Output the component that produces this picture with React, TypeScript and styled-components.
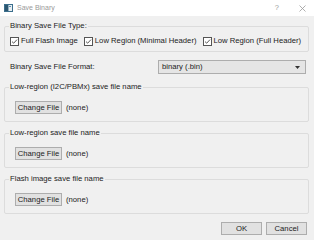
import React from "react";
import styled, { createGlobalStyle } from "styled-components";

const Global = createGlobalStyle`
  html, body { margin: 0; padding: 0; background: #f0f0f0; }
  body { font-family: "Liberation Sans", Arial, sans-serif; font-size: 7.7px; color: #222; }
  * { box-sizing: border-box; }
`;

const Window = styled.div`
  width: 314px;
  height: 240px;
  display: flex;
  flex-direction: column;
  background: #f0f0f0;
  overflow: hidden;
`;

const TitleBar = styled.div`
  height: 16px;
  flex: none;
  background: #ffffff;
  display: flex;
  align-items: center;
  padding: 0 8px 0 4px;
`;

const TitleText = styled.span`
  margin-left: 4px;
  font-size: 7px;
  color: #9a9a9a;
  line-height: 16px;
  flex: 1;
`;

const TitleButton = styled.span<{ $gap: number }>`
  margin-left: ${(p) => p.$gap}px;
  color: #9a9a9a;
  font-size: 7.5px;
  line-height: 16px;
  display: flex;
  align-items: center;
`;

const Body = styled.div`
  flex: 1;
  display: flex;
  flex-direction: column;
  padding: 5px 5px 0 4px;
`;

const Group = styled.fieldset<{ $top: number; $pt: number; $pb: number }>`
  margin: ${(p) => p.$top}px 0 0 0;
  min-width: 0;
  border: 1px solid #dcdcdc;
  border-radius: 2px;
  padding: ${(p) => p.$pt}px 4px ${(p) => p.$pb}px 5px;
`;

const Legend = styled.legend`
  padding: 0 1px;
  margin-left: -1px;
  font-size: 7.7px;
  line-height: 10px;
  color: #222;
`;

const CheckRow = styled.div`
  display: flex;
  align-items: center;
  gap: 6px;
  height: 10px;
`;

const CheckItem = styled.label`
  display: flex;
  align-items: center;
  gap: 2px;
  white-space: nowrap;
  line-height: 10px;
`;

const FormatRow = styled.div`
  margin-top: 8px;
  height: 14px;
  display: flex;
  align-items: center;
  padding: 0 3px 0 6px;
`;

const FieldLabel = styled.span`
  flex: 1;
  line-height: 14px;
`;

const Combo = styled.div`
  width: 148px;
  height: 14px;
  border: 1px solid #adadad;
  background: #e5e5e5;
  display: flex;
  align-items: center;
  padding: 0 5px 0 3px;
`;

const ComboText = styled.span`
  flex: 1;
  line-height: 12px;
`;

const FileRow = styled.div`
  display: flex;
  align-items: center;
  gap: 4px;
  padding-left: 5px;
  height: 13px;
`;

const PushButton = styled.button<{ $w: number }>`
  width: ${(p) => p.$w}px;
  height: 13px;
  padding: 0;
  margin: 0;
  border: 1px solid #adadad;
  background: #e1e1e1;
  font-family: "Liberation Sans", Arial, sans-serif;
  font-size: 7.7px;
  line-height: 11px;
  color: #222;
  text-align: center;
`;

const Footer = styled.div`
  margin-top: 8px;
  display: flex;
  justify-content: flex-end;
  gap: 4px;
  padding-right: 2px;
`;

const CheckBox = () => (
  <svg width="9" height="9" viewBox="0 0 9 9">
    <rect x="0.5" y="0.5" width="8" height="8" fill="#fff" stroke="#555" />
    <path d="M2 4.6 L3.7 6.2 L7 2.6" fill="none" stroke="#444" strokeWidth="0.9" />
  </svg>
);

const AppIcon = () => (
  <svg width="9" height="8" viewBox="0 0 9 8">
    <rect x="0" y="0" width="9" height="8" fill="#3b6e8c" />
    <rect x="1" y="1" width="3" height="6" fill="#2b5670" />
    <rect x="4.5" y="1" width="3.5" height="6" fill="#e8eef2" />
    <rect x="5" y="2" width="2" height="1" fill="#5c8fb0" />
  </svg>
);

const CloseIcon = () => (
  <svg width="7" height="7" viewBox="0 0 7 7">
    <path d="M0.5 0.5 L6.5 6.5 M6.5 0.5 L0.5 6.5" stroke="#9a9a9a" strokeWidth="0.8" />
  </svg>
);

const Arrow = () => (
  <svg width="5" height="3" viewBox="0 0 5 3">
    <path d="M0 0 L5 0 L2.5 3 Z" fill="#333" />
  </svg>
);

const FileGroup = ({ title, top }: { title: string; top: number }) => (
  <Group $top={top} $pt={9} $pb={7}>
    <Legend>{title}</Legend>
    <FileRow>
      <PushButton $w={47}>Change File</PushButton>
      <span>(none)</span>
    </FileRow>
  </Group>
);

export default function App() {
  return (
    <>
      <Global />
      <Window>
        <TitleBar>
          <AppIcon />
          <TitleText>Save Binary</TitleText>
          <TitleButton $gap={0}>?</TitleButton>
          <TitleButton $gap={20}>
            <CloseIcon />
          </TitleButton>
        </TitleBar>
        <Body>
          <Group $top={0} $pt={5} $pb={5}>
            <Legend>Binary Save File Type:</Legend>
            <CheckRow>
              <CheckItem>
                <CheckBox />
                Full Flash Image
              </CheckItem>
              <CheckItem>
                <CheckBox />
                Low Region (Minimal Header)
              </CheckItem>
              <CheckItem>
                <CheckBox />
                Low Region (Full Header)
              </CheckItem>
            </CheckRow>
          </Group>
          <FormatRow>
            <FieldLabel>Binary Save File Format:</FieldLabel>
            <Combo>
              <ComboText>binary (.bin)</ComboText>
              <Arrow />
            </Combo>
          </FormatRow>
          <FileGroup title="Low-region (I2C/PBMx) save file name" top={8} />
          <FileGroup title="Low-region save file name" top={6} />
          <FileGroup title="Flash image save file name" top={6} />
          <Footer>
            <PushButton $w={41}>OK</PushButton>
            <PushButton $w={41}>Cancel</PushButton>
          </Footer>
        </Body>
      </Window>
    </>
  );
}
